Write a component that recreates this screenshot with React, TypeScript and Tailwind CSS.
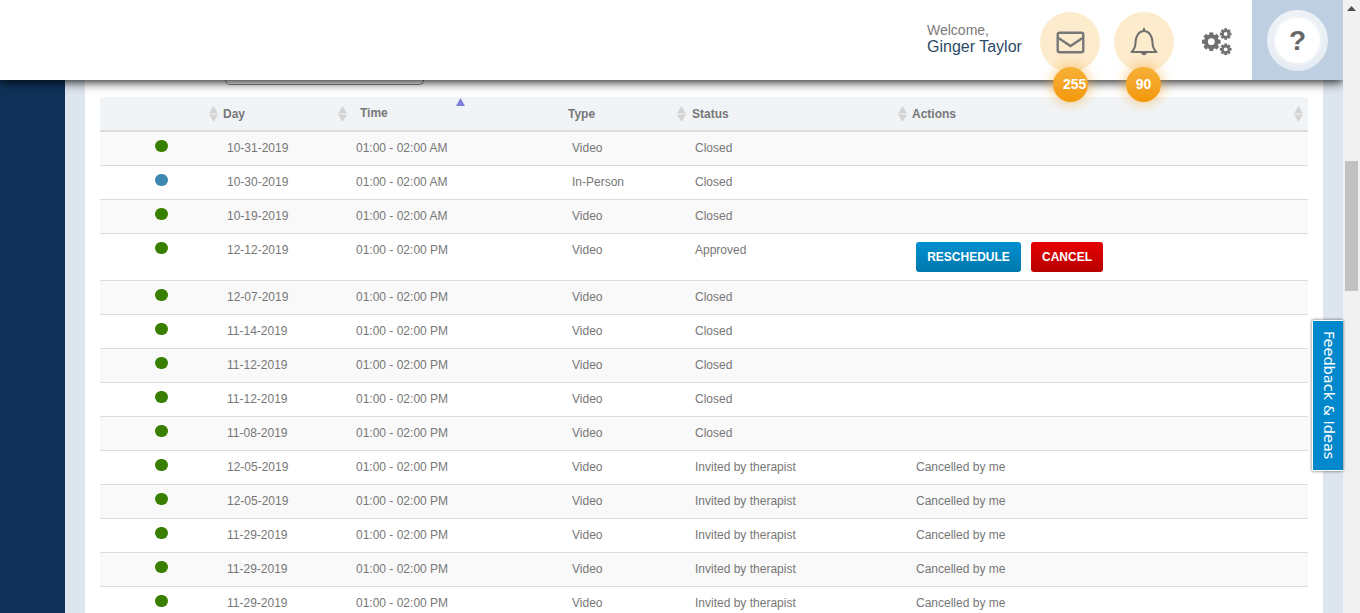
import React from "react";

type Row = { dot: "g" | "b"; day: string; time: string; type: string; status: string; action?: string; buttons?: boolean };
const A = "01:00 - 02:00 AM";
const P = "01:00 - 02:00 PM";
const rows: Row[] = [
  { dot: "g", day: "10-31-2019", time: A, type: "Video", status: "Closed" },
  { dot: "b", day: "10-30-2019", time: A, type: "In-Person", status: "Closed" },
  { dot: "g", day: "10-19-2019", time: A, type: "Video", status: "Closed" },
  { dot: "g", day: "12-12-2019", time: P, type: "Video", status: "Approved", buttons: true },
  { dot: "g", day: "12-07-2019", time: P, type: "Video", status: "Closed" },
  { dot: "g", day: "11-14-2019", time: P, type: "Video", status: "Closed" },
  { dot: "g", day: "11-12-2019", time: P, type: "Video", status: "Closed" },
  { dot: "g", day: "11-12-2019", time: P, type: "Video", status: "Closed" },
  { dot: "g", day: "11-08-2019", time: P, type: "Video", status: "Closed" },
  { dot: "g", day: "12-05-2019", time: P, type: "Video", status: "Invited by therapist", action: "Cancelled by me" },
  { dot: "g", day: "12-05-2019", time: P, type: "Video", status: "Invited by therapist", action: "Cancelled by me" },
  { dot: "g", day: "11-29-2019", time: P, type: "Video", status: "Invited by therapist", action: "Cancelled by me" },
  { dot: "g", day: "11-29-2019", time: P, type: "Video", status: "Invited by therapist", action: "Cancelled by me" },
  { dot: "g", day: "11-29-2019", time: P, type: "Video", status: "Invited by therapist", action: "Cancelled by me" },
];

const gridCols = "grid grid-cols-[109px_129px_224px_115px_221px_410px]";

function Sort() {
  return (
    <svg width="9" height="16" viewBox="0 0 9 16" className="shrink-0">
      <path d="M4.5 0L9 7.5H0z M4.5 16L0 8.5h9z" fill="#d4d4d4" />
    </svg>
  );
}

function Gears() {
  const gear = (cx: number, cy: number, r: number, hole: number, w: number, out: number) => (
    <g>
      {[0, 45, 90, 135, 180, 225, 270, 315].map((a) => (
        <rect key={a} x={cx - w / 2} y={cy - r - out} width={w} height={out + 1} fill="#707070" transform={`rotate(${a} ${cx} ${cy})`} />
      ))}
      <circle cx={cx} cy={cy} r={r} fill="#707070" />
      <circle cx={cx} cy={cy} r={hole} fill="#fff" />
    </g>
  );
  return (
    <svg width="32" height="30" viewBox="0 0 32 30">
      {gear(10.3, 14.7, 7.4, 3.4, 4, 1.9)}
      {gear(24.7, 7, 4.3, 1.9, 2.8, 1.5)}
      {gear(24.7, 22.3, 4.3, 1.9, 2.8, 1.5)}
    </svg>
  );
}

function Badge({ children, className }: { children: React.ReactNode; className: string }) {
  return (
    <span
      className={`absolute top-[67px] h-[35px] w-[35px] rounded-full bg-gradient-to-b from-[#f7b136] to-[#f39704] shadow-[0_0_14px_rgba(243,156,18,0.6)] flex items-center text-white text-[14px] font-bold ${className}`}
    >
      {children}
    </span>
  );
}

export default function App() {
  return (
    <div className="relative flex h-[613px] w-[1360px] overflow-hidden bg-[#dde5ee] font-['Liberation_Sans',Arial,sans-serif]">
      <div className="flex w-[1343px] flex-col">
        <header className="relative z-10 flex h-[80px] shrink-0 items-start bg-white pl-[927px] shadow-[0_2px_10px_rgba(0,0,0,0.9)]">
          <div className="mt-[21px] w-[113px] leading-none">
            <div className="text-[14px] leading-[18px] text-[#7a7a7a]">Welcome,</div>
            <div className="text-[16px] leading-[16px] text-[#2c4a68]">Ginger Taylor</div>
          </div>
          <div className="mt-[12px] flex h-[60px] w-[60px] items-center justify-center rounded-full bg-[#fdebcd]">
            <svg width="29" height="23" viewBox="0 0 29 23" fill="none" stroke="#777" strokeWidth="2.4">
              <rect x="1.7" y="1.7" width="25.6" height="19.6" rx="2" />
              <path d="M1.7 6.5L14.5 15L27.3 6.5" />
            </svg>
          </div>
          <div className="ml-[14px] mt-[12px] flex h-[60px] w-[60px] items-center justify-center rounded-full bg-[#fdebcd]">
            <svg width="28" height="30" viewBox="0 0 28 30" fill="none" stroke="#707070" strokeWidth="2">
              <path d="M14 1v2.5" />
              <path d="M1.5 25c2.8-2.4 4-5 4-9.5 0-6.5 3.6-11.5 8.5-11.5s8.5 5 8.5 11.5c0 4.5 1.2 7.1 4 9.5z" strokeLinejoin="round" />
              <path d="M11.5 25.5c0 3 5 3 5 0z" fill="#707070" strokeWidth="1" />
            </svg>
          </div>
          <div className="ml-[27px] mt-[27px]">
            <Gears />
          </div>
          <div className="ml-[19px] flex h-[80px] w-[91px] items-start justify-center bg-[#bfcfe2] pt-[10px]">
            <div className="flex h-[61px] w-[61px] items-center justify-center rounded-full bg-gradient-to-b from-[#eef2f6] to-[#e6ecf3]">
              <div className="flex h-[45px] w-[45px] items-center justify-center rounded-full bg-white pt-[1px] text-[28px] font-bold text-[#666] shadow-[0_0_4px_rgba(255,255,255,0.9)]">?</div>
            </div>
          </div>
        </header>

        <div className="flex min-h-0 flex-1">
          <aside className="w-[65px] shrink-0 bg-[#0f3158]" />
          <main className="ml-[20px] w-[1238px] shrink-0 bg-white px-[15px]">
            <div className="ml-[125px] mb-[12px] h-[5px] w-[199px] rounded-b-[8px] border border-t-0 border-[#8a8a8a]" />
            <div className={`${gridCols} h-[35px] border-b-2 border-[#dcdcdc] bg-[#f1f4f7] text-[12px] font-bold text-[#777]`}>
              <div />
              <div className="flex items-center gap-[5px] pt-[1px]"><Sort /><span>Day</span></div>
              <div className="relative flex items-center">
                <Sort />
                <span className="ml-[13px] -mt-[2px]">Time</span>
                <svg width="9" height="8" viewBox="0 0 9 8" className="absolute left-[118px] top-[1px]"><path d="M4.5 0L9 8H0z" fill="#7f7fe0" /></svg>
              </div>
              <div className="flex items-center pl-[6px] pt-[1px]">Type</div>
              <div className="flex items-center gap-[6px] pt-[1px]"><Sort /><span>Status</span></div>
              <div className="flex items-center pt-[1px]">
                <Sort /><span className="ml-[5px]">Actions</span>
                <span className="ml-auto mr-[5px]"><Sort /></span>
              </div>
            </div>
            {rows.map((r, i) => (
              <div
                key={i}
                className={`${gridCols} border-b border-[#dcdcdc] text-[12px] leading-[14px] text-[#777] ${i % 2 === 0 ? "bg-[#f9f9f9]" : "bg-white"} ${r.buttons ? "h-[47px] !bg-white" : "h-[34px]"}`}
              >
                <div className="pl-[55px] pt-[8px]">
                  <span className={`block h-[12px] w-[13px] rounded-full ${r.dot === "g" ? "bg-[#387f00]" : "bg-[#3d87b0]"}`} />
                </div>
                <div className="pl-[18px] pt-[9px]">{r.day}</div>
                <div className="pl-[18px] pt-[9px]">{r.time}</div>
                <div className="pl-[10px] pt-[9px]">{r.type}</div>
                <div className="pl-[18px] pt-[9px]">{r.status}</div>
                <div className={r.buttons ? "pl-[18px] pt-[8px]" : "pl-[18px] pt-[9px]"}>
                  {r.action}
                  {r.buttons && (
                    <div className="flex gap-[10px]">
                      <button className="h-[30px] w-[105px] rounded-[3px] bg-gradient-to-b from-[#0090d2] to-[#0077ab] text-[12px] font-bold text-white">RESCHEDULE</button>
                      <button className="h-[30px] w-[72px] rounded-[3px] bg-gradient-to-b from-[#e60000] to-[#b80000] text-[12px] font-bold text-white">CANCEL</button>
                    </div>
                  )}
                </div>
              </div>
            ))}
          </main>
        </div>
      </div>

      <div className="relative z-20 w-[17px] shrink-0 bg-[#f1f1f1]">
        <svg width="9" height="5" viewBox="0 0 9 5" className="mx-auto mt-[6px]"><path d="M4.5 0L9 5H0z" fill="#505050" /></svg>
        <div className="absolute left-[2px] top-[161px] h-[130px] w-[13px] bg-[#c1c1c1]" />
      </div>

      <Badge className="left-[1053px] z-20 pl-[10px]">255</Badge>
      <Badge className="left-[1126px] z-20 justify-center">90</Badge>

      <div className="absolute left-[1312px] top-[320px] z-20 flex h-[151px] w-[31px] items-center justify-center border-l border-t border-b border-white bg-[#0087cc] shadow-[0_0_3px_rgba(0,0,0,0.6)]">
        <span className="text-[14.5px] text-white font-['DejaVu_Sans',sans-serif] [writing-mode:vertical-rl]">Feedback &amp; Ideas</span>
      </div>
    </div>
  );
}
